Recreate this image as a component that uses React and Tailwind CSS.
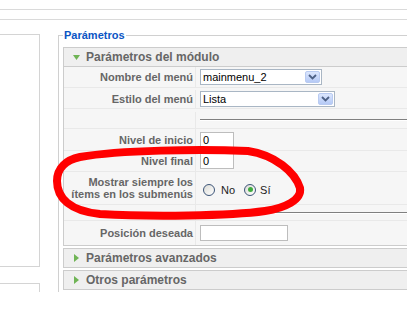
import React from 'react'

function Select({ value, className }) {
  return (
    <div className={'flex h-[16px] items-center justify-between border border-[#a9b6c4] bg-white pl-[2px] pr-[1px] ' + className}>
      <span className="text-[11px] leading-[12px] text-black">{value}</span>
      <span className="flex h-[12px] w-[15px] items-center justify-center rounded-[2px] border border-[#b9cbf1] bg-gradient-to-b from-[#dbe6fd] to-[#b6caf6]">
        <svg width="9" height="6" viewBox="0 0 9 6">
          <path d="M1 1 L4.5 4.5 L8 1" fill="none" stroke="#4d6185" strokeWidth="1.8" />
        </svg>
      </span>
    </div>
  )
}

function TextInput({ value, className }) {
  return (
    <div className={'flex h-[16px] items-center border border-[#bdbdbd] bg-white pl-[2px] text-[11px] leading-[12px] text-black ' + className}>
      {value}
    </div>
  )
}

function Radio({ checked }) {
  return (
    <span className="flex h-[12px] w-[12px] items-center justify-center rounded-full border border-[#3d5578] bg-gradient-to-br from-[#dcdcd7] to-white">
      {checked && <span className="h-[5px] w-[5px] rounded-full bg-[#3fab3f]" />}
    </span>
  )
}

function Row({ label, className, children }) {
  return (
    <div className={'flex border-b border-[#e9e9e9] ' + className}>
      <div className="flex w-[132px] shrink-0 items-center justify-end border-r border-[#e9e9e9] pr-[2px] text-right text-[11px] font-bold leading-[12px] text-[#666666]">
        {label}
      </div>
      <div className="flex flex-1 items-center pl-[4px]">{children}</div>
    </div>
  )
}

function Rule() {
  return <div className="h-[2px] w-full border-t border-[#808080] border-b border-b-white" />
}

function Toggler({ open, title }) {
  return (
    <div className="flex h-[18px] items-center bg-[#efefef] pl-[9px]">
      {open ? (
        <svg width="7" height="5" viewBox="0 0 7 5" className="mr-[6px]">
          <path d="M0 0 L7 0 L3.5 5 Z" fill="#6fb455" />
        </svg>
      ) : (
        <svg width="5" height="8" viewBox="0 0 5 8" className="ml-[1px] mr-[7px]">
          <path d="M0 0 L5 4 L0 8 Z" fill="#6fb455" />
        </svg>
      )}
      <span className="text-[12px] font-bold leading-[14px] text-[#666666]">{title}</span>
    </div>
  )
}

export default function App() {
  return (
    <div className="relative h-[319px] w-[407px] overflow-hidden bg-white font-['Liberation_Sans',Arial,sans-serif]">
      <div className="h-[10px] border-b border-[#dadada]" />
      <div className="h-[10px] border-b border-[#dadada]" />

      <div className="flex h-[272px] w-[440px] overflow-hidden">
        <div className="w-[40px] shrink-0 pt-[14px]">
          <div className="h-[233px] border-y border-r border-[#d4d4d4]" />
          <div className="mt-[16px] h-[30px] border-t border-r border-[#d4d4d4]" />
        </div>

        <fieldset className="ml-[18px] mt-[8px] min-w-0 flex-1 border-l border-t border-[#d0d0d0] px-[4px] pt-[5px]">
          <legend className="px-[1px] text-[11px] font-bold leading-[14px] text-[#0b55c4]">Parámetros</legend>

          <div className="mb-[2px] border border-[#cccccc]">
            <div className="border-b border-[#cccccc]">
              <Toggler open title="Parámetros del módulo" />
            </div>
            <div className="bg-[#f6f6f6]">
              <Row label="Nombre del menú" className="h-[21px]">
                <Select value="mainmenu_2" className="w-[122px]" />
              </Row>
              <Row label="Estilo del menú" className="h-[21px] pt-[2px]">
                <Select value="Lista" className="w-[135px]" />
              </Row>
              <Row label="" className="h-[20px] pt-[3px]">
                <Rule />
              </Row>
              <Row label="Nivel de inicio" className="h-[22px]">
                <TextInput value="0" className="w-[34px]" />
              </Row>
              <Row label="Nivel final" className="h-[21px]">
                <TextInput value="0" className="w-[34px]" />
              </Row>
              <Row label={<span>Mostrar siempre los<br />ítems en los submenús</span>} className="h-[33px]">
                <div className="flex items-center pl-[3px] pt-[3px] text-[11px] leading-[12px] text-[#222222]">
                  <Radio />
                  <span className="ml-[6px]">No</span>
                  <span className="ml-[9px]"><Radio checked /></span>
                  <span className="ml-[4px]">Sí</span>
                </div>
              </Row>
              <Row label="" className="h-[16px]">
                <Rule />
              </Row>
              <Row label="Posición deseada" className="h-[24px] border-b-0">
                <TextInput value="" className="w-[88px]" />
              </Row>
            </div>
          </div>

          <div className="mb-[2px] border border-[#cccccc]">
            <Toggler title="Parámetros avanzados" />
          </div>
          <div className="border border-[#cccccc]">
            <Toggler title="Otros parámetros" />
          </div>
        </fieldset>
      </div>

      <svg className="pointer-events-none absolute inset-0" width="407" height="319" viewBox="0 0 407 319">
        <path
          d="M 80 157 C 120 150, 200 149, 248 151 C 275 155, 295 172, 300 188 C 302 200, 285 208, 265 211 C 230 216, 150 217, 100 214 C 70 211, 57 198, 57 181 C 57 168, 66 160, 80 157 Z"
          fill="none"
          stroke="#ff0000"
          strokeWidth="8"
          strokeLinejoin="round"
        />
      </svg>
    </div>
  )
}
